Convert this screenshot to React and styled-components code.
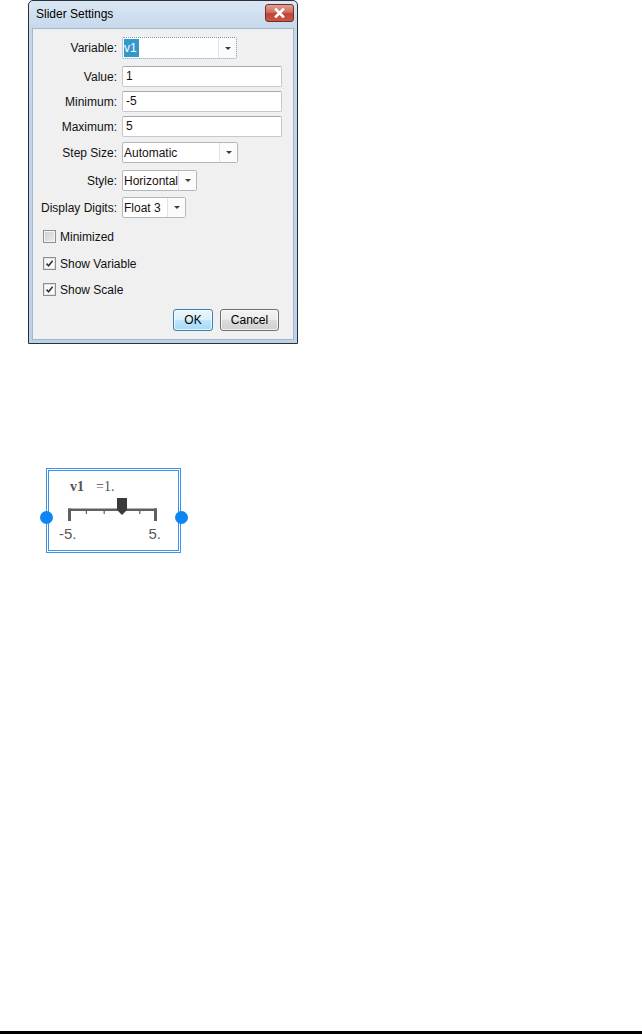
import React from 'react';
import styled, { createGlobalStyle } from 'styled-components';

const Global = createGlobalStyle`
  html, body { margin: 0; padding: 0; background: #fff; }
  body { font-family: "Liberation Sans", Arial, sans-serif; color: #111; }
`;

const Page = styled.div`
  min-height: 1034px;
  display: flex;
  flex-direction: column;
  align-items: flex-start;
`;

const Window = styled.div`
  margin-left: 28px;
  width: 270px;
  height: 344px;
  box-sizing: border-box;
  border: 1px solid #26313d;
  border-radius: 5px 5px 0 0;
  background: linear-gradient(#dbe7f3, #c4d7eb 30px, #bdd2e8);
  padding: 0 3px 3px;
  display: flex;
  flex-direction: column;
`;

const TitleBar = styled.div`
  height: 27px;
  display: flex;
  justify-content: space-between;
  align-items: flex-start;
`;

const Title = styled.span`
  font-size: 12px;
  line-height: 27px;
  padding-left: 4px;
  color: #000;
`;

const CloseButton = styled.div`
  margin-top: 3px;
  width: 29px;
  height: 18px;
  box-sizing: border-box;
  border: 1px solid #7d2a22;
  border-radius: 3px;
  background: linear-gradient(#e0a297, #cf6f62 45%, #bd4433 55%, #c7584a);
  display: flex;
  align-items: center;
  justify-content: center;
`;

const Panel = styled.div`
  flex: 1;
  background: #f0f0f0;
  border: 1px solid #a3b7cc;
  padding: 8px 10px 0 0;
  display: flex;
  flex-direction: column;
`;

const Row = styled.div`
  display: grid;
  grid-template-columns: 84px auto;
  column-gap: 5px;
  align-items: center;
  margin-top: ${p => p.$mt || 0}px;
`;

const Label = styled.label`
  font-size: 12px;
  text-align: right;
  color: #111;
`;

const TextField = styled.div`
  width: ${p => p.$w}px;
  height: 21px;
  box-sizing: border-box;
  border: 1px solid #c5c8cf;
  border-top-color: #a5a8b0;
  border-radius: 2px;
  background: #fff;
  font-size: 12px;
  line-height: 19px;
  padding-left: 3px;
  color: #1a1010;
`;

const Select = styled.div`
  width: ${p => p.$w}px;
  height: ${p => (p.$focus ? 22 : 21)}px;
  box-sizing: border-box;
  border: 1px ${p => (p.$focus ? 'dotted #6f94bb' : 'solid #b4b7be')};
  border-radius: 2px;
  background: #fff;
  display: flex;
  align-items: stretch;
  font-size: 12px;
`;

const SelectValue = styled.div`
  flex: 1;
  padding: 1px 0 1px 1px;
  display: flex;
  align-items: center;
  overflow: hidden;
  white-space: nowrap;
  color: #1a1010;
`;

const Highlight = styled.span`
  background: #3399cc;
  color: #fff;
  padding: 2px 2px 1px 0;
  line-height: 15px;
`;

const ArrowBox = styled.div`
  width: 17px;
  border-left: 1px solid #e4e4e4;
  background: #fbfbfb;
  display: flex;
  align-items: center;
  justify-content: center;
  &::after {
    content: '';
    border-left: 3px solid transparent;
    border-right: 3px solid transparent;
    border-top: 3px solid #3c3c3c;
  }
`;

const CheckRow = styled.div`
  display: flex;
  align-items: center;
  gap: 4px;
  padding-left: 10px;
  height: 13px;
  margin-top: ${p => p.$mt}px;
  font-size: 12px;
`;

const Box = styled.span`
  width: 13px;
  height: 13px;
  box-sizing: border-box;
  border: 1px solid #8e8f8f;
  background: ${p => (p.$checked ? 'linear-gradient(135deg, #f6f6f6, #ffffff)' : 'linear-gradient(135deg, #cfcfcf, #ececec)')};
  box-shadow: inset 0 0 0 1px ${p => (p.$checked ? '#e2e2e2' : '#f4f4f4')};
  display: flex;
  align-items: center;
  justify-content: center;
`;

const ButtonRow = styled.div`
  display: flex;
  justify-content: flex-end;
  gap: 7px;
  margin-top: 13px;
  margin-right: 4px;
`;

const Button = styled.button`
  width: ${p => p.$w}px;
  height: 22px;
  box-sizing: border-box;
  padding: 0;
  font-family: "Liberation Sans", Arial, sans-serif;
  font-size: 12px;
  color: #000;
  border-radius: 3px;
  border: 1px solid ${p => (p.$primary ? '#3c7fb1' : '#707070')};
  background: ${p =>
    p.$primary
      ? 'linear-gradient(#eaf6fd, #d9f0fc 50%, #bee6fd 51%, #a7d9f5)'
      : 'linear-gradient(#f2f2f2, #ebebeb 50%, #dddddd 51%, #cfcfcf)'};
  box-shadow: inset 0 0 0 1px rgba(255, 255, 255, 0.7);
`;

const Widget = styled.div`
  position: relative;
  margin-left: 46px;
  margin-top: 124px;
  width: 135px;
  height: 85px;
  box-sizing: border-box;
  border: 1px solid #3b93ea;
  box-shadow: inset 0 0 0 1px #fff, inset 0 0 0 2px #3b93ea;
  display: flex;
  flex-direction: column;
  align-items: flex-start;
`;

const WidgetHeader = styled.div`
  margin: 10px 0 0 23px;
  height: 16px;
  line-height: 16px;
  display: flex;
  gap: 12px;
  color: #555;
`;

const VarName = styled.span`
  font-family: "Liberation Serif", "Times New Roman", serif;
  font-weight: bold;
  font-size: 14px;
`;

const VarValue = styled.span`
  font-family: "Liberation Serif", "Times New Roman", serif;
  font-size: 14px;
`;

const Scale = styled.svg`
  display: block;
  margin-top: 1px;
`;

const ScaleLabels = styled.div`
  margin: 3px 0 0 12px;
  width: 102px;
  display: flex;
  justify-content: space-between;
  font-size: 15px;
  line-height: 17px;
  color: #5a5a5a;
`;

const Handle = styled.span`
  position: absolute;
  top: 42px;
  ${p => (p.$side === 'left' ? 'left: -7px;' : 'right: -8px;')}
  width: 13px;
  height: 13px;
  border-radius: 50%;
  background: #0d86f3;
`;

const Rule = styled.div`
  margin-top: auto;
  align-self: stretch;
  height: 3px;
  background: #000;
`;

function Check() {
  return (
    <svg width="9" height="9" viewBox="0 0 9 9">
      <path d="M1.5 4.6 L3.6 6.8 L7.6 1.8" fill="none" stroke="#333" strokeWidth="1.6" />
    </svg>
  );
}

function CheckItem({ mt, checked, children }) {
  return (
    <CheckRow $mt={mt}>
      <Box $checked={checked}>{checked && <Check />}</Box>
      <span>{children}</span>
    </CheckRow>
  );
}

const ticks = [38.8, 56.6, 92.2];

export default function App() {
  return (
    <Page>
      <Global />
      <Window>
        <TitleBar>
          <Title>Slider Settings</Title>
          <CloseButton>
            <svg width="11" height="10" viewBox="0 0 11 10">
              <path d="M2 1.5 L9 8.5 M9 1.5 L2 8.5" stroke="#fff" strokeWidth="2.6" strokeLinecap="square" />
            </svg>
          </CloseButton>
        </TitleBar>
        <Panel>
          <Row>
            <Label>Variable:</Label>
            <Select $w={115} $focus>
              <SelectValue>
                <Highlight>v1</Highlight>
              </SelectValue>
              <ArrowBox />
            </Select>
          </Row>
          <Row $mt={7}>
            <Label>Value:</Label>
            <TextField $w={160}>1</TextField>
          </Row>
          <Row $mt={4}>
            <Label>Minimum:</Label>
            <TextField $w={160}>-5</TextField>
          </Row>
          <Row $mt={4}>
            <Label>Maximum:</Label>
            <TextField $w={160}>5</TextField>
          </Row>
          <Row $mt={5}>
            <Label>Step Size:</Label>
            <Select $w={116}>
              <SelectValue>Automatic</SelectValue>
              <ArrowBox />
            </Select>
          </Row>
          <Row $mt={7}>
            <Label>Style:</Label>
            <Select $w={75}>
              <SelectValue>Horizontal</SelectValue>
              <ArrowBox />
            </Select>
          </Row>
          <Row $mt={6}>
            <Label>Display Digits:</Label>
            <Select $w={64}>
              <SelectValue>Float 3</SelectValue>
              <ArrowBox />
            </Select>
          </Row>
          <CheckItem mt={12}>Minimized</CheckItem>
          <CheckItem mt={14} checked>Show Variable</CheckItem>
          <CheckItem mt={13} checked>Show Scale</CheckItem>
          <ButtonRow>
            <Button $w={40} $primary>OK</Button>
            <Button $w={59}>Cancel</Button>
          </ButtonRow>
        </Panel>
      </Window>

      <Widget>
        <Handle $side="left" />
        <Handle $side="right" />
        <WidgetHeader>
          <VarName>v1</VarName>
          <VarValue>=1.</VarValue>
        </WidgetHeader>
        <Scale width="133" height="26" viewBox="0 0 133 26">
          <rect x="21" y="12.5" width="89" height="2.5" fill="#606060" />
          <rect x="21" y="12.5" width="3" height="12.5" fill="#606060" />
          <rect x="107" y="12.5" width="3" height="12.5" fill="#606060" />
          {ticks.map(x => (
            <rect key={x} x={x} y="13" width="1.2" height="5" fill="#606060" />
          ))}
          <path d="M70 2 H80 V14 L75 19 L70 14 Z" fill="#3a3a3a" />
        </Scale>
        <ScaleLabels>
          <span>-5.</span>
          <span>5.</span>
        </ScaleLabels>
      </Widget>

      <Rule />
    </Page>
  );
}
